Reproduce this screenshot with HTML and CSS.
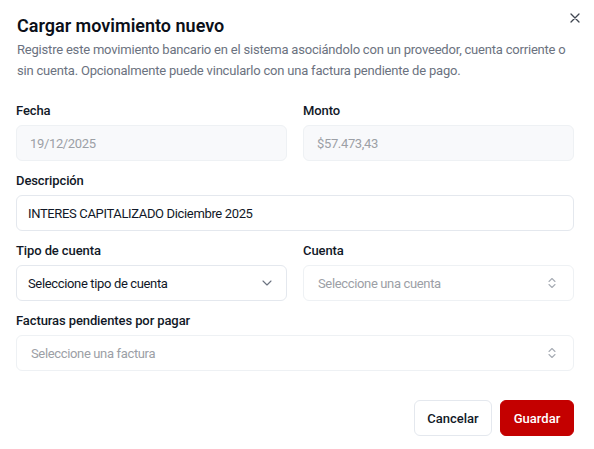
FILE: index.html
```html
<!DOCTYPE html>
<html lang="es">
<head>
<meta charset="utf-8">
<link rel="stylesheet" href="styles.css">
</head>
<body>
<div class="dialog">
  <button class="close" aria-label="Cerrar">
    <svg width="10" height="10" viewBox="0 0 10 10"><path d="M1 1L9 9M9 1L1 9" stroke="#3f4650" stroke-width="1.3" stroke-linecap="round"/></svg>
  </button>
  <h2 class="title">Cargar movimiento nuevo</h2>
  <p class="desc">Registre este movimiento bancario en el sistema asociándolo con un proveedor, cuenta corriente o sin cuenta. Opcionalmente puede vincularlo con una factura pendiente de pago.</p>
  <div class="form">
    <div class="row two">
      <div class="field">
        <label class="label">Fecha</label>
        <div class="input disabled">19/12/2025</div>
      </div>
      <div class="field">
        <label class="label">Monto</label>
        <div class="input disabled">$57.473,43</div>
      </div>
    </div>
    <div class="field">
      <label class="label">Descripción</label>
      <div class="input">INTERES CAPITALIZADO Diciembre 2025</div>
    </div>
    <div class="row two">
      <div class="field">
        <label class="label">Tipo de cuenta</label>
        <div class="input select">
          <span>Seleccione tipo de cuenta</span>
          <svg width="10" height="6" viewBox="0 0 10 6"><path d="M1 1L5 5L9 1" fill="none" stroke="#6b7280" stroke-width="1.1" stroke-linecap="round" stroke-linejoin="round"/></svg>
        </div>
      </div>
      <div class="field">
        <label class="label">Cuenta</label>
        <div class="input select faded">
          <span>Seleccione una cuenta</span>
          <svg width="8" height="12" viewBox="0 0 8 12"><path d="M1 4.5L4 1.5L7 4.5M1 7.5L4 10.5L7 7.5" fill="none" stroke="#a8adb5" stroke-width="1.1" stroke-linecap="round" stroke-linejoin="round"/></svg>
        </div>
      </div>
    </div>
    <div class="field">
      <label class="label">Facturas pendientes por pagar</label>
      <div class="input select faded">
        <span>Seleccione una factura</span>
        <svg width="8" height="12" viewBox="0 0 8 12"><path d="M1 4.5L4 1.5L7 4.5M1 7.5L4 10.5L7 7.5" fill="none" stroke="#a8adb5" stroke-width="1.1" stroke-linecap="round" stroke-linejoin="round"/></svg>
      </div>
    </div>
  </div>
  <div class="footer">
    <button class="btn outline">Cancelar</button>
    <button class="btn primary">Guardar</button>
  </div>
</div>
</body>
</html>
```
FILE: styles.css
```css
* { box-sizing: border-box; }
html, body { margin: 0; padding: 0; background: #ffffff; }
body {
  font-family: Roboto, "Liberation Sans", sans-serif;
  color: #111827;
  width: 594px;
  height: 449px;
  overflow: hidden;
}
.dialog {
  position: relative;
  padding: 15px 20px 0 16px;
}
.close {
  position: absolute;
  top: 13px;
  right: 14px;
  width: 10px;
  height: 10px;
  padding: 0;
  border: 0;
  background: none;
  display: flex;
}
.title {
  margin: 0 0 0 1px;
  font-size: 18px;
  line-height: 22px;
  font-weight: 600;
  color: #0b0f19;
}
.desc {
  margin: 2px 0 0 1px;
  font-size: 13px;
  line-height: 21px;
  color: #6b7280;
  letter-spacing: -0.2px;
}
.form {
  margin-top: 22px;
  display: flex;
  flex-direction: column;
  gap: 12px;
}
.row.two {
  display: grid;
  grid-template-columns: 1fr 1fr;
  gap: 16px;
}
.field { display: flex; flex-direction: column; gap: 6px; }
.label {
  font-size: 13px;
  line-height: 16px;
  font-weight: 500;
  color: #111827;
  letter-spacing: -0.1px;
}
.input {
  height: 36px;
  border: 1px solid #e4e8ee;
  border-radius: 6px;
  padding: 0 11px;
  display: flex;
  align-items: center;
  font-size: 13px;
  color: #111827;
  background: #fff;
  letter-spacing: -0.35px;
}
.input.disabled {
  background: #f8f9fb;
  border-color: #eef1f4;
  color: #9ca0a6;
  padding-left: 13px;
}
.select { justify-content: space-between; padding-right: 14px; }
.select.faded { border-color: #eef1f4; color: #9ca0a6; padding-left: 14px; padding-right: 17px; }
.footer {
  margin-top: 29px;
  display: flex;
  justify-content: flex-end;
  gap: 8px;
}
.btn {
  height: 36px;
  border-radius: 6px;
  font-family: inherit;
  font-size: 13px;
  font-weight: 500;
  padding: 0 10px;
}
.btn.outline {
  background: #fff;
  border: 1px solid #e4e8ee;
  color: #111827;
  width: 78px;
}
.btn.primary {
  background: #c40000;
  border: 1px solid #c40000;
  color: #fff;
  width: 74px;
}
```
